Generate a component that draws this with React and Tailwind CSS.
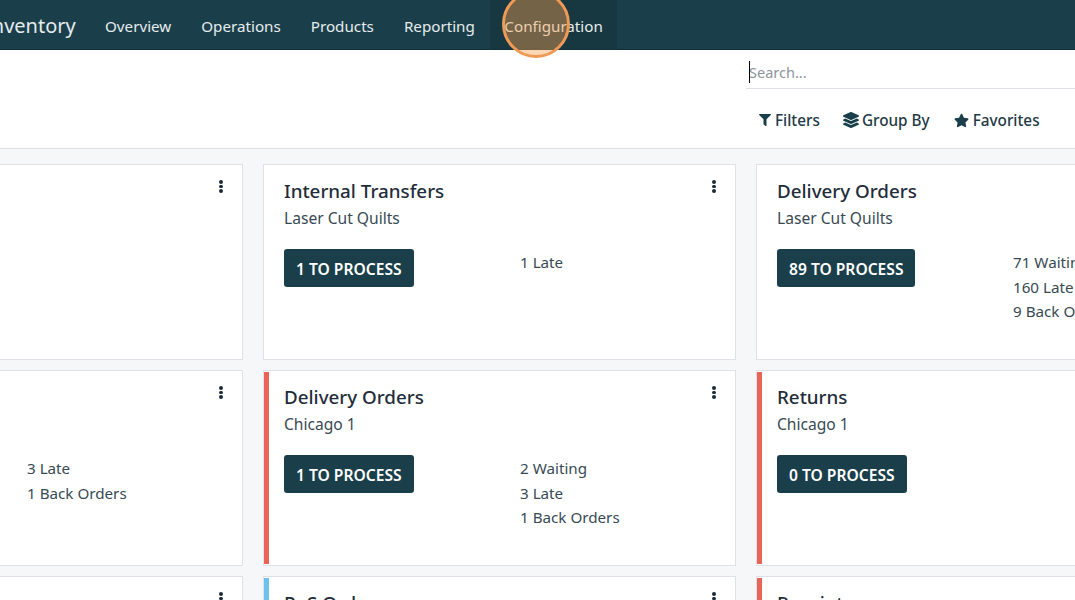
import React from 'react';
import { FaFilter, FaLayerGroup, FaStar } from 'react-icons/fa';

const cards = [
    { title: '', sub: '', btn: '', stats: [] },
    { title: 'Internal Transfers', sub: 'Laser Cut Quilts', btn: '1 TO PROCESS', stats: ['1 Late'] },
    { title: 'Delivery Orders', sub: 'Laser Cut Quilts', btn: '89 TO PROCESS', stats: ['71 Waiting', '160 Late', '9 Back Orders'] },
    { title: '', sub: '', btn: '', stats: ['3 Late', '1 Back Orders'] },
    { title: 'Delivery Orders', sub: 'Chicago 1', btn: '1 TO PROCESS', stats: ['2 Waiting', '3 Late', '1 Back Orders'], bar: 'bg-[#ea6558]' },
    { title: 'Returns', sub: 'Chicago 1', btn: '0 TO PROCESS', stats: [], bar: 'bg-[#ea6558]' },
    { title: '', sub: '', btn: '', stats: [] },
    { title: 'PoS Orders', sub: 'Chicago 1', btn: '0 TO PROCESS', stats: [], bar: 'bg-[#6cc1ed]' },
    { title: 'Receipts', sub: 'Chicago 1', btn: '0 TO PROCESS', stats: [], bar: 'bg-[#ea6558]' },
];

const menu = ['Overview', 'Operations', 'Products', 'Reporting'];

function Card({ card }) {
    return (
        <div className="relative h-[196px] border border-[#dee2e6] bg-white">
            {card.bar && <div className={`absolute left-0 top-[1px] bottom-[1px] w-[5px] ${card.bar}`} />}
            <div className="absolute right-[19px] top-[15px] flex flex-col gap-[1px]">
                <span className="h-[3.5px] w-[4px] rounded-full bg-[#1c2b36]" />
                <span className="h-[3.5px] w-[4px] rounded-full bg-[#1c2b36]" />
                <span className="h-[3.5px] w-[4px] rounded-full bg-[#1c2b36]" />
            </div>
            <div className="pl-[20px] pt-[12px]">
                <div className="h-[28px] text-[18.8px] leading-[28px] font-medium text-[#1f2d3a]">{card.title}</div>
                <div className="mt-[2px] h-[22px] text-[15.6px] leading-[22px] text-[#374a54]">{card.sub}</div>
                <div className="mt-[20px] flex">
                    <div className="w-[236px] shrink-0">
                        {card.btn && (
                            <button className="h-[38px] rounded-[3px] bg-[#1a3f4b] px-[12px] pt-[3px] text-[15.6px] font-semibold text-white">
                                {card.btn}
                            </button>
                        )}
                    </div>
                    <div className="mt-[1px] flex flex-col whitespace-nowrap text-[15.2px] leading-[24.5px] text-[#374a54]">
                        {card.stats.map((s) => (
                            <span key={s}>{s}</span>
                        ))}
                    </div>
                </div>
            </div>
        </div>
    );
}

export default function App() {
    return (
        <div className="relative h-[600px] w-[1075px] overflow-hidden bg-[#f6f7f9] font-['Noto_Sans','Open_Sans',sans-serif]">
            {/* top bar */}
            <div className="flex h-[50px] items-center border-b border-[#12303a] bg-[#1a3f4b] text-[#e6eced]">
                <span className="ml-[-15px] w-[105px] shrink-0 pt-[2px] text-[20px] whitespace-nowrap">Inventory</span>
                <div className="flex h-full items-center text-[15.2px]">
                    {menu.map((m) => (
                        <span key={m} className="px-[15px] pt-[3px]">{m}</span>
                    ))}
                    <span className="flex h-full items-center bg-[#173741] px-[14.5px] pt-[3px]">Configuration</span>
                </div>
            </div>

            {/* control panel */}
            <div className="flex h-[99px] justify-end border-b border-[#dee2e6] bg-white">
                <div className="w-[329px] shrink-0">
                    <div className="relative mt-[7px] h-[32px] border-b border-[#dee2e6] pl-[3px] text-[14.5px] leading-[30px] text-[#8b959c]">
                        <span className="absolute left-[3px] top-[4px] h-[22px] w-[1px] bg-black" />
                        Search...
                    </div>
                    <div className="mt-[20px] flex items-center pl-[13px] text-[15.3px] font-medium text-[#1f3a45]">
                        <FaFilter className="h-[12px] w-[12px] text-[#1a3f4b]" />
                        <span className="ml-[4px]">Filters</span>
                        <FaLayerGroup className="ml-[23px] h-[16px] w-[16px] text-[#1a3f4b]" />
                        <span className="ml-[3px]">Group By</span>
                        <FaStar className="ml-[24px] h-[15px] w-[15px] text-[#1a3f4b]" />
                        <span className="ml-[4px]">Favorites</span>
                    </div>
                </div>
            </div>

            {/* kanban */}
            <div className="ml-[-230px] mt-[15px] grid w-[1459px] grid-cols-[473px_473px_473px] gap-x-[20px] gap-y-[10px]">
                {cards.map((c, i) => (
                    <Card key={i} card={c} />
                ))}
            </div>

            {/* click highlight */}
            <div className="absolute left-[502px] top-[-10px] h-[68px] w-[68px] rounded-full border-[3px] border-[#ee9a55] bg-[#f5a0506b]" />
        </div>
    );
}
